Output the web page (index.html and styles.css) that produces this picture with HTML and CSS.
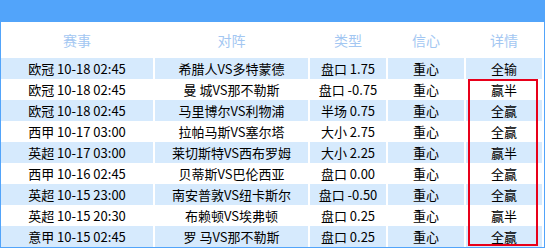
FILE: index.html
```html
<!DOCTYPE html>
<html lang="zh">
<head>
<meta charset="utf-8">
<link rel="stylesheet" href="styles.css">
</head>
<body>
<div class="panel">
  <div class="topbar"></div>
  <div class="table">
    <div class="row head">
      <div class="c">赛事</div><div class="c">对阵</div><div class="c">类型</div><div class="c">信心</div><div class="c">详情</div>
    </div>
    <div class="row alt">
      <div class="c">欧冠 10-18 02:45</div><div class="c">希腊人VS多特蒙德</div><div class="c">盘口 1.75</div><div class="c">重心</div><div class="c">全输</div>
    </div>
    <div class="row">
      <div class="c">欧冠 10-18 02:45</div><div class="c">曼 城VS那不勒斯</div><div class="c">盘口 -0.75</div><div class="c">重心</div><div class="c">赢半</div>
    </div>
    <div class="row alt">
      <div class="c">欧冠 10-18 02:45</div><div class="c">马里博尔VS利物浦</div><div class="c">半场 0.75</div><div class="c">重心</div><div class="c">全赢</div>
    </div>
    <div class="row">
      <div class="c">西甲 10-17 03:00</div><div class="c">拉帕马斯VS塞尔塔</div><div class="c">大小 2.75</div><div class="c">重心</div><div class="c">全赢</div>
    </div>
    <div class="row alt">
      <div class="c">英超 10-17 03:00</div><div class="c">莱切斯特VS西布罗姆</div><div class="c">大小 2.25</div><div class="c">重心</div><div class="c">赢半</div>
    </div>
    <div class="row">
      <div class="c">西甲 10-16 02:45</div><div class="c">贝蒂斯VS巴伦西亚</div><div class="c">盘口 0.00</div><div class="c">重心</div><div class="c">全赢</div>
    </div>
    <div class="row alt">
      <div class="c">英超 10-15 23:00</div><div class="c">南安普敦VS纽卡斯尔</div><div class="c">盘口 -0.50</div><div class="c">重心</div><div class="c">全赢</div>
    </div>
    <div class="row">
      <div class="c">英超 10-15 20:30</div><div class="c">布赖顿VS埃弗顿</div><div class="c">盘口 0.25</div><div class="c">重心</div><div class="c">赢半</div>
    </div>
    <div class="row alt">
      <div class="c">意甲 10-15 02:45</div><div class="c">罗 马VS那不勒斯</div><div class="c">盘口 0.25</div><div class="c">重心</div><div class="c">全赢</div>
    </div>
    <div class="highlight"></div>
  </div>
</div>
</body>
</html>
```

FILE: styles.css
```css
html, body {
  margin: 0;
  padding: 0;
  background: #ffffff;
}
.panel {
  width: 545px;
  box-sizing: border-box;
  font-family: "Microsoft YaHei", "Noto Sans CJK SC", "Noto Sans", sans-serif;
  font-size: 13px;
  color: #000000;
}
.topbar {
  height: 22px;
  background: #52a4fa;
}
.table {
  position: relative;
  border-left: 1px solid #52a4fa;
  border-right: 1px solid #52a4fa;
  border-bottom: 1px solid #52a4fa;
  padding-right: 1px;
}
.row {
  display: grid;
  grid-template-columns: 152px 153px 76px 76px 76px;
  column-gap: 2px;
  height: 21px;
}
.row.head {
  height: 36px;
  font-size: 14px;
  color: #a3c7f2;
}
.row.alt .c {
  background: #d6eafd;
}
.c {
  display: flex;
  align-items: center;
  justify-content: center;
  white-space: pre;
  line-height: 1;
}
.highlight {
  position: absolute;
  left: 467px;
  top: 57px;
  width: 66px;
  height: 163px;
  border: 2px solid #e8001a;
}
```
